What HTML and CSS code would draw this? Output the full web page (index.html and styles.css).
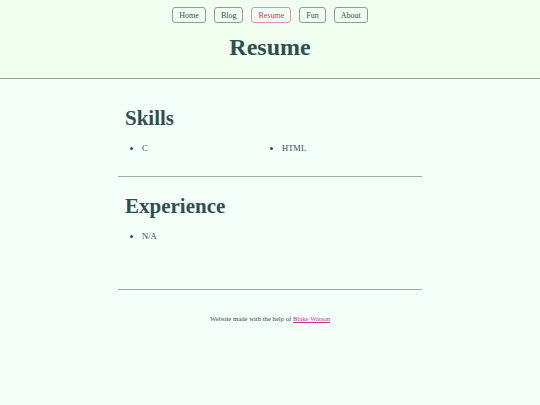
FILE: index.html
```html
<!DOCTYPE html>
<html>
<head>
<meta charset="utf-8">
<link rel="stylesheet" href="styles.css">
</head>
<body>
<header class="site-header">
  <nav class="nav">
    <a class="nav-btn" href="#">Home</a>
    <a class="nav-btn" href="#">Blog</a>
    <a class="nav-btn active" href="#">Resume</a>
    <a class="nav-btn" href="#">Fun</a>
    <a class="nav-btn" href="#">About</a>
  </nav>
  <h1 class="page-title">Resume</h1>
</header>
<main class="content">
  <section class="section first">
    <h2 class="section-title">Skills</h2>
    <ul class="list two-col">
      <li>C</li>
      <li>HTML</li>
    </ul>
  </section>
  <hr class="rule">
  <section class="section">
    <h2 class="section-title">Experience</h2>
    <ul class="list">
      <li>N/A</li>
    </ul>
  </section>
  <hr class="rule footer-rule">
  <footer class="footer">Website made with the help of <a class="footer-link" href="#">Blake Watson</a></footer>
</main>
</body>
</html>
```

FILE: styles.css
```css
html, body {
  margin: 0;
  padding: 0;
}
body {
  background: #f5fffa;
  color: #2f4f4f;
  font-family: "Liberation Serif", Georgia, serif;
  width: 540px;
  height: 405px;
}
.site-header {
  background: #f0fff0;
  border-bottom: 1px solid #8fa59c;
  height: 79px;
  box-sizing: border-box;
  padding-top: 7px;
}
.nav {
  display: flex;
  justify-content: center;
  gap: 8px;
}
.nav-btn {
  display: flex;
  align-items: center;
  justify-content: center;
  height: 16px;
  box-sizing: border-box;
  padding: 0 6px;
  border: 1px solid #8a9d96;
  border-radius: 3px;
  font-size: 8px;
  color: #2f4f4f;
  text-decoration: none;
}
.nav-btn.active {
  color: #c2378a;
  border-color: #e08fc0;
}
.page-title {
  margin: 11px 0 0;
  text-align: center;
  font-size: 24px;
  line-height: 26px;
  font-weight: bold;
}
.content {
  width: 304px;
  margin: 0 auto;
}
.section {
  padding: 0 7px;
}
.section-title {
  margin: 0;
  padding-top: 17px;
  font-size: 21px;
  line-height: 24px;
  font-weight: bold;
}
.first .section-title {
  padding-top: 27px;
}
.list {
  margin: 13px 0 0;
  padding: 0 0 0 17px;
  font-size: 8.5px;
  line-height: 10px;
}
.two-col {
  display: grid;
  grid-template-columns: 140px 1fr;
}
.two-col li {
  display: list-item;
}
.rule {
  margin: 23px 0 0;
  border: 0;
  border-top: 1px solid #9aaaa4;
  height: 0;
}
.footer-rule {
  margin-top: 48px;
}
.footer {
  text-align: center;
  font-size: 6.7px;
  margin-top: 25px;
}
.footer-link {
  color: #c2378a;
}
```
